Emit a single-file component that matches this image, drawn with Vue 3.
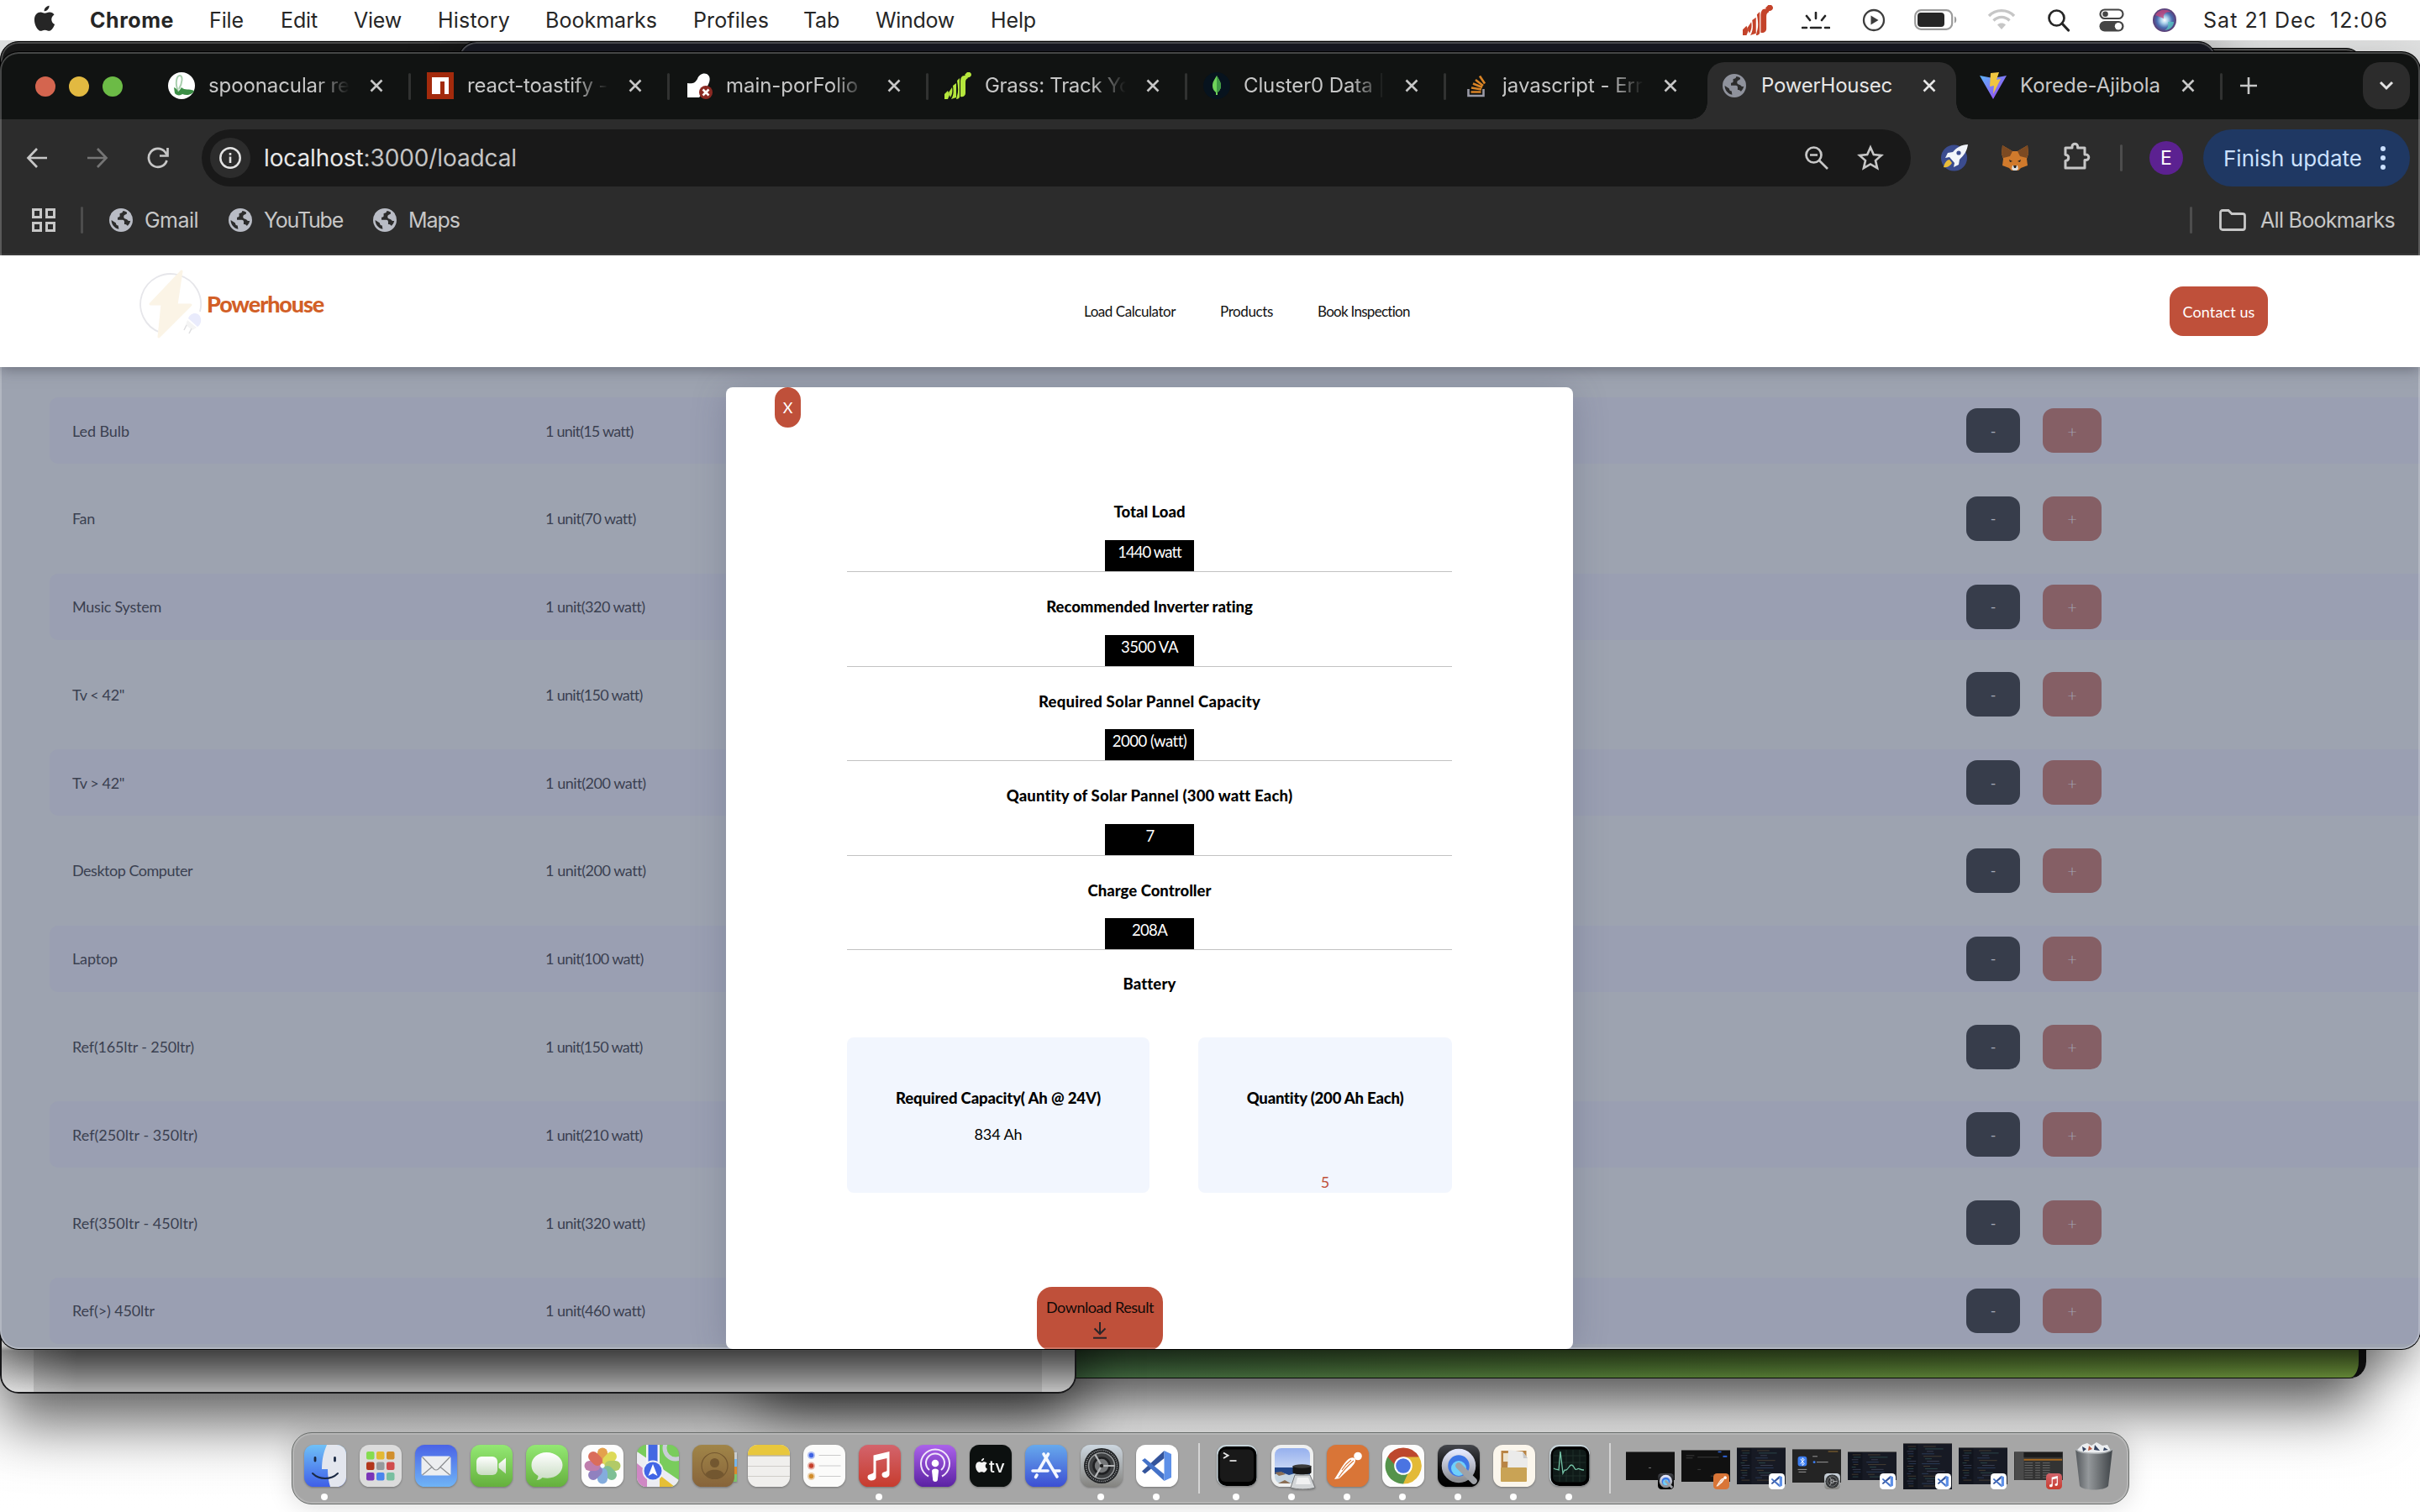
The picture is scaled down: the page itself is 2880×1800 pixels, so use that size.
<script setup>
// Spreads or tightens letter-spacing so that a label fills the given width.
const vFit = {
  mounted(el, { value }) {
    if (!value) return
    const natural = el.getBoundingClientRect().width
    el.style.letterSpacing = `${(value - natural) / el.textContent.trim().length}px`
  }
}

const menus = [
  { t: 'File', w: 41, cell: 85 },
  { t: 'Edit', w: 44, cell: 87 },
  { t: 'View', w: 57, cell: 100 },
  { t: 'History', w: 86, cell: 128 },
  { t: 'Bookmarks', w: 133, cell: 176 },
  { t: 'Profiles', w: 90, cell: 131 },
  { t: 'Tab', w: 43, cell: 86 },
  { t: 'Window', w: 94, cell: 137 },
  { t: 'Help', w: 54, cell: 60 }
]

const tabs = [
  { t: 'spoonacular re', w: 168, icon: 'spoon', fade: true },
  { t: 'react-toastify -', w: 167, icon: 'npm', fade: true },
  { t: 'main-porFolio', w: 157, icon: 'main', fade: true },
  { t: 'Grass: Track Yo', w: 174, icon: 'grass', fade: true },
  { t: 'Cluster0 Data |', w: 168, icon: 'mongo', fade: true },
  { t: 'javascript - Err', w: 167, icon: 'stack', fade: true },
  { t: 'PowerHousec', w: 156, icon: 'globe', active: true },
  { t: 'Korede-Ajibola', w: 167, icon: 'vite' }
]

const bookmarks = [
  { t: 'Gmail', w: 64, cell: 142 },
  { t: 'YouTube', w: 94, cell: 172 },
  { t: 'Maps', w: 61, cell: 120 }
]

const rows = [
  ['Led Bulb', 68, '15', 104],
  ['Fan', 27, '70', 107],
  ['Music System', 106, '320', 118],
  ['Tv < 42"', 62, '150', 115],
  ['Tv > 42"', 62, '200', 119],
  ['Desktop Computer', 143, '200', 119],
  ['Laptop', 54, '100', 116],
  ['Ref(165ltr - 250ltr)', 145, '150', 115],
  ['Ref(250ltr - 350ltr)', 149, '210', 115],
  ['Ref(350ltr - 450ltr)', 149, '320', 118],
  ['Ref(>) 450ltr', 98, '460', 118]
]

const results = [
  ['Total Load', 85, '1440 watt', 75],
  ['Recommended Inverter rating', 246, '3500 VA', 68],
  ['Required Solar Pannel Capacity', 264, '2000 (watt)', 88],
  ['Qauntity of Solar Pannel (300 watt Each)', 340, '7', 9],
  ['Charge Controller', 147, '208A', 42]
]

const apps = [
  ['finder', true], ['launchpad'], ['mail'], ['facetime'], ['messages'], ['photos'],
  ['maps'], ['contacts'], ['notes'], ['reminders'], ['music', true], ['podcasts'],
  ['tv'], ['appstore'], ['settings', true], ['vscode', true]
]
const running = ['terminal', 'preview', 'postman', 'chrome', 'quicktime', 'archive', 'activity']
const minis = [
  ['quicktime', 34, 'plain'], ['postman', 38, 'post'], ['vscode', 44, 'code'], ['settings', 40, 'sys'],
  ['vscode', 34, 'code'], ['vscode', 55, 'code'], ['vscode', 44, 'code'], ['music', 34, 'list']
]
const codeColors = ['#39557f', '#6b5a3d', '#3b6d68', '#585d78']
</script>

<template>
  <div class="desktop">
    <svg class="sprite" width="0" height="0" aria-hidden="true">
      <defs>
        <linearGradient id="gBlue" x1="0" y1="0" x2="0" y2="1"><stop offset="0" stop-color="#6fc0f7" /><stop offset="1" stop-color="#3f5fe8" /></linearGradient>
        <linearGradient id="gMail" x1="0" y1="0" x2="0" y2="1"><stop offset="0" stop-color="#4a63e6" /><stop offset="1" stop-color="#6fb4f6" /></linearGradient>
        <linearGradient id="gGreen" x1="0" y1="0" x2="0" y2="1"><stop offset="0" stop-color="#93e873" /><stop offset="1" stop-color="#65b03d" /></linearGradient>
        <linearGradient id="gRed" x1="0" y1="0" x2="0" y2="1"><stop offset="0" stop-color="#d3646c" /><stop offset="1" stop-color="#c73c2e" /></linearGradient>
        <linearGradient id="gPurple" x1="0" y1="0" x2="0" y2="1"><stop offset="0" stop-color="#ab62ea" /><stop offset="1" stop-color="#5b22a3" /></linearGradient>
        <linearGradient id="gStore" x1="0" y1="0" x2="0" y2="1"><stop offset="0" stop-color="#67a9ec" /><stop offset="1" stop-color="#3c4fd3" /></linearGradient>
        <linearGradient id="gBrown" x1="0" y1="0" x2="0" y2="1"><stop offset="0" stop-color="#a08548" /><stop offset="1" stop-color="#87643a" /></linearGradient>
        <linearGradient id="gGrey" x1="0" y1="0" x2="0" y2="1"><stop offset="0" stop-color="#cdd7e0" /><stop offset="1" stop-color="#84837f" /></linearGradient>
        <linearGradient id="gWhite" x1="0" y1="0" x2="0" y2="1"><stop offset="0" stop-color="#ffffff" /><stop offset="1" stop-color="#c9dcc2" /></linearGradient>
        <linearGradient id="gDark" x1="0" y1="0" x2="0" y2="1"><stop offset="0" stop-color="#44464c" /><stop offset=".6" stop-color="#0a0a0a" /><stop offset="1" stop-color="#000" /></linearGradient>
        <linearGradient id="gRing" x1="0" y1="0" x2="0" y2="1"><stop offset="0" stop-color="#e2e6fb" /><stop offset="1" stop-color="#8d8f94" /></linearGradient>
        <linearGradient id="gSky" x1="0" y1="0" x2="0" y2="1"><stop offset="0" stop-color="#96b0ee" /><stop offset="1" stop-color="#c3d3f4" /></linearGradient>
        <linearGradient id="gVite" x1="0" y1="0" x2="1" y2="1"><stop offset="0" stop-color="#5bb5fb" /><stop offset="1" stop-color="#a33df0" /></linearGradient>
        <linearGradient id="gTrash" x1="0" y1="0" x2="1" y2="0"><stop offset="0" stop-color="#55595d" /><stop offset=".35" stop-color="#94989b" /><stop offset=".6" stop-color="#74787b" /><stop offset="1" stop-color="#3f4448" /></linearGradient>
        <radialGradient id="gSiri"><stop offset="0" stop-color="#fff" /><stop offset=".3" stop-color="#a9d0ea" /><stop offset=".65" stop-color="#4a6cb0" /><stop offset="1" stop-color="#5b3a72" /></radialGradient>
        <clipPath id="tile"><rect width="50" height="50" rx="11.5" /></clipPath>
      </defs>

      <symbol id="globe" viewBox="0 0 24 24"><path fill="currentColor" fill-rule="evenodd" d="M12 0a12 12 0 1 0 0 24 12 12 0 0 0 0-24zM9.800 21.200C5.400 20.200 2.200 16.500 2.200 11.900l4.600 3.100c0 1.600 1 2.500 2.400 2.500zM14 2.600c-.2 1.900-1.600 2.600-3.200 2.600v2.600c0 1-.9 1.400-2.200 1.400v2.500h5c1.300 0 1.800.9 1.800 2v2.600c1.500 0 2.700.4 3.300 1.700a9.700 9.700 0 0 0 3-5.400c-1.500.6-2.500 0-3.200-.9-.9-1.200-3.500-.7-3.700-2.800-.2-2 1.200-2.400 2.400-2.900 1-.4.800-1.400.8-1.900a9.600 9.600 0 0 0-4-1.500z" /></symbol>
      <symbol id="close" viewBox="0 0 16 16"><path d="M1.500 1.500l13 13M14.500 1.500l-13 13" stroke="currentColor" stroke-width="2.600" fill="none" /></symbol>
      <symbol id="grass" viewBox="0 0 32 32"><path fill="currentColor" d="M0 32v-6l4-4 2 5-2 5zM5 24l4-6c1 5 0 9-2 12zM8 32c3-5 3-9 2-16l4-3v17zM15 28c2-6 1-12 0-18l3-3v22c0 2-2 3-4 3zM19 29V12c0-5 1-8 5-8h2l2 3c-2 1-3 2-3 5v13c0 3-3 5-6 4zM24 3l3-3c3-1 5 1 5 3s-3 4-5 3z" /></symbol>
      <symbol id="spoon" viewBox="0 0 32 32"><circle cx="16" cy="16" r="16" fill="#fff" /><path d="M12 22C8 14 10 4 14 4s3 9-1 16" fill="none" stroke="#a9cfae" stroke-width="2" /><path d="M7 18c3 1 4 3 5 5 2-2 3-3 4-5 4 4 9 1 15 4-2 5-9 6-14 4-2 2-7 2-9-1z" fill="#3c8f46" /></symbol>
      <symbol id="npm" viewBox="0 0 32 32"><path fill="#a32a0c" d="M0 0h32v32H0z" /><path fill="#fff" d="M6 6h20v20h-5V11h-5v15H6z" /></symbol>
      <symbol id="main" viewBox="0 0 32 32"><path fill="#fff" d="M2 30V13c6 1 9 0 12-5 2-7 11-9 14-3 2 5-1 9-3 14l-9 11z" /><circle cx="24" cy="24" r="8" fill="#8b2a23" /><path d="M20.500 20.500l7 7M27.500 20.500l-7 7" stroke="#fff" stroke-width="2.600" /></symbol>
      <symbol id="mongo" viewBox="0 0 32 32"><circle cx="16" cy="16" r="16" fill="#07131e" /><path fill="#6fd35a" d="M16 4c2 4 5 7 5 12 0 5-3 7-4 8v3h-2v-3c-1-1-4-3-4-8 0-5 3-8 5-12z" /><path fill="#3f9a45" d="M16 4c2 4 5 7 5 12 0 5-3 7-5 9z" /></symbol>
      <symbol id="stack" viewBox="0 0 32 32"><path d="M7.500 20v8h18v-8" fill="none" stroke="#9a9aa6" stroke-width="2.600" /><path d="M10.500 23.500h12M11 18.500l12 2M13 13.500l11 4.500M16 9l9 7M21 4.500l6 9" stroke="#d98325" stroke-width="2.600" /></symbol>
      <symbol id="vite" viewBox="0 0 32 32"><path fill="url(#gVite)" d="M0 4l16 3 16-3-16 28z" /><path fill="#f0c640" d="M13 1l10-1-3 9 5-1-9 18 1-10-5 1z" /></symbol>

      <symbol id="finder" viewBox="0 0 50 50"><g clip-path="url(#tile)"><path fill="url(#gBlue)" d="M0 0h50v50H0z" /><path fill="#e3e6ee" d="M27 0c-4 9-6 18-6 29h7c0 8 1 15 3 21h19V0z" /></g><path d="M13 15.500v3.500M36.500 15.500v3.500" stroke="#1b2a44" stroke-width="2.800" stroke-linecap="round" /><path d="M10 34c8 8 22 8 30 0" fill="none" stroke="#1b2a44" stroke-width="2" stroke-linecap="round" /></symbol>
      <symbol id="launchpad" viewBox="0 0 50 50"><rect width="50" height="50" rx="11.500" fill="#dcdcdc" /><g><rect x="8" y="8" width="9.500" height="9.500" rx="2" fill="#86dc50" /><rect x="20" y="8" width="9.500" height="9.500" rx="2" fill="#e3b935" /><rect x="32" y="8" width="9.500" height="9.500" rx="2" fill="#d18f2d" /><rect x="8" y="20.500" width="9.500" height="9.500" rx="2" fill="#b2371c" /><rect x="20" y="20.500" width="9.500" height="9.500" rx="2" fill="#979a9c" /><rect x="32" y="20.500" width="9.500" height="9.500" rx="2" fill="#d04c4c" /><rect x="8" y="33" width="9.500" height="9.500" rx="2" fill="#7a35b8" /><rect x="20" y="33" width="9.500" height="9.500" rx="2" fill="#4a86ee" /><rect x="32" y="33" width="9.500" height="9.500" rx="2" fill="#78bfa0" /></g></symbol>
      <symbol id="mail" viewBox="0 0 50 50"><rect width="50" height="50" rx="11.500" fill="url(#gMail)" /><rect x="7.500" y="13.500" width="35" height="23" rx="2.500" fill="#eceef0" /><path d="M8.500 14.500l14 14.500q2.500 2 5 0l14-14.500M8.500 36l12-10M41.500 36l-12-10" fill="none" stroke="#8b8d90" stroke-width="1.200" /></symbol>
      <symbol id="facetime" viewBox="0 0 50 50"><rect width="50" height="50" rx="11.500" fill="url(#gGreen)" /><rect x="7" y="14" width="25" height="22" rx="6" fill="url(#gWhite)" /><path d="M33.500 22.500l8.500-7v19l-8.500-7z" fill="url(#gWhite)" /></symbol>
      <symbol id="messages" viewBox="0 0 50 50"><rect width="50" height="50" rx="11.500" fill="url(#gGreen)" /><path d="M24.500 9C14 9 6.500 16 6.500 24c0 6 3 10 8 13 0 2-1 4-2 5 3 0 5-1 7-3 14 3 24-5 24-15C43.500 16 35 9 24.500 9z" fill="url(#gWhite)" /></symbol>
      <symbol id="photos" viewBox="0 0 50 50"><rect width="50" height="50" rx="11.500" fill="#fdfdfd" /><g opacity=".85"><rect x="19" y="3.500" width="12" height="19" rx="6" fill="#e0922f" /><rect x="19" y="3.500" width="12" height="19" rx="6" fill="#d8d53c" transform="rotate(45 25 25)" /><rect x="19" y="3.500" width="12" height="19" rx="6" fill="#a5c24d" transform="rotate(90 25 25)" /><rect x="19" y="3.500" width="12" height="19" rx="6" fill="#68b583" transform="rotate(135 25 25)" /><rect x="19" y="3.500" width="12" height="19" rx="6" fill="#6f9fd8" transform="rotate(180 25 25)" /><rect x="19" y="3.500" width="12" height="19" rx="6" fill="#7e6cb5" transform="rotate(225 25 25)" /><rect x="19" y="3.500" width="12" height="19" rx="6" fill="#b569a0" transform="rotate(270 25 25)" /><rect x="19" y="3.500" width="12" height="19" rx="6" fill="#d4543f" transform="rotate(315 25 25)" /></g></symbol>
      <symbol id="maps" viewBox="0 0 50 50"><g clip-path="url(#tile)"><path fill="#79cc5c" d="M0 0h50v50H0z" /><path fill="#ececf2" d="M0 8l50 34v8H0z" /><path fill="#e6bf36" d="M27 36l18 14H27z" /><path fill="#cf87c4" d="M0 22l12 10v18H0z" /><circle cx="46" cy="4" r="13" fill="none" stroke="#c9cdd6" stroke-width="5" /><path fill="#f4f4f6" d="M11 0h16v22H11z" /><path fill="#4468e2" d="M13.500 0h11v24h-11z" /></g><circle cx="19" cy="31" r="12.500" fill="#eef0f6" /><circle cx="19" cy="31" r="10.500" fill="#4166e6" /><path fill="#fff" d="M19 23l5.500 14-5.500-3-5.500 3z" /></symbol>
      <symbol id="contacts" viewBox="0 0 54 50"><path d="M46 9h7v8h-7z" fill="#c9ccce" /><path d="M46 17h7v9h-7z" fill="#76b5ea" /><path d="M46 26h7v9h-7z" fill="#d88a2b" /><path d="M46 35h7v9h-7z" fill="#7cc46a" /><rect width="50" height="50" rx="11.500" fill="url(#gBrown)" /><circle cx="26.500" cy="25" r="15.500" fill="none" stroke="#735730" stroke-width="1.200" /><circle cx="26.500" cy="21.500" r="5.500" fill="#735730" /><path d="M15.500 35c3-7 19-7 22 0-5 7-17 7-22 0z" fill="#735730" /></symbol>
      <symbol id="notes" viewBox="0 0 50 50"><g clip-path="url(#tile)"><path fill="#f0efed" d="M0 0h50v50H0z" /><path fill="#e8c73c" d="M0 0h50v12.500H0z" /><path fill="#a39a78" d="M0 12.500h50v1H0z" /><path stroke="#cfcdc9" stroke-width="1" d="M0 25.500h50M0 37.500h50" /></g></symbol>
      <symbol id="reminders" viewBox="0 0 50 50"><rect width="50" height="50" rx="11.500" fill="#fbfbfa" /><g fill-opacity=".4"><circle cx="9.500" cy="12.500" r="4.500" fill="#3f64e4" /><circle cx="9.500" cy="25" r="4.500" fill="#c6402b" /><circle cx="9.500" cy="37.500" r="4.500" fill="#d28d2c" /></g><circle cx="9.500" cy="12.500" r="2.700" fill="#3f64e4" /><circle cx="9.500" cy="25" r="2.700" fill="#c6402b" /><circle cx="9.500" cy="37.500" r="2.700" fill="#d28d2c" /><path d="M18.500 12.500h26M18.500 25h26M18.500 37.500h26" stroke="#cbcbcb" stroke-width="1.200" /></symbol>
      <symbol id="music" viewBox="0 0 50 50"><rect width="50" height="50" rx="11.500" fill="url(#gRed)" /><path d="M17.500 12.500l19-4.500v27c0 5-9 6-9 .5 0-4 6-3 6-5V16l-13 3v19.500c0 5-10 5.500-10 0 0-4.500 7-3 7-6z" fill="#fff" /></symbol>
      <symbol id="podcasts" viewBox="0 0 50 50"><rect width="50" height="50" rx="11.500" fill="url(#gPurple)" /><g fill="none" stroke="#f1e6fa" stroke-width="2"><path d="M17 37.500a17 17 0 1 1 16 0" /><path d="M18 30a11 11 0 1 1 14 0" /></g><circle cx="25" cy="22" r="4.300" fill="#fff" /><path d="M21 31c0-3.500 8-3.500 8 0l-1.200 11c-.5 2.500-5.100 2.500-5.600 0z" fill="#fff" /></symbol>
      <symbol id="apple" viewBox="0 0 28 34"><path fill="currentColor" d="M20 .5c.3 3.600-3 7.300-6.400 7.200C13.200 4.200 16.500.8 20 .5zM27 24.500c-1.500 4.200-4.500 8.500-7.300 8.500-2 0-2.800-1.200-5.200-1.200-2.500 0-3.300 1.200-5.200 1.200C5.500 33 1 26 1 18.500 1 12.500 5 9 9 9c2.200 0 4 1.400 5.400 1.400S18 8.800 20.600 9c2.500.1 4.600 1.300 5.800 3.200-5 3-4.400 10 .6 12.300z" /></symbol>
      <symbol id="tv" viewBox="0 0 50 50"><rect width="50" height="50" rx="11.500" fill="#0c100f" /><use href="#apple" x="6.500" y="15.500" width="15" height="18" color="#f4f4f4" /><text x="23" y="33" fill="#f4f4f4" font-family="Inter, sans-serif" font-weight="500" font-size="20">tv</text></symbol>
      <symbol id="appstore" viewBox="0 0 50 50"><rect width="50" height="50" rx="11.500" fill="url(#gStore)" /><g stroke="#f5f8ff" stroke-width="3.600" stroke-linecap="round"><path d="M27.500 11L16 31M22 11l16 27M9 31h18M34 31h7M14 36l-1.500 2.500" /></g></symbol>
      <symbol id="settings" viewBox="0 0 50 50"><rect width="50" height="50" rx="11.500" fill="url(#gGrey)" /><circle cx="25" cy="25" r="21" fill="#202224" /><circle cx="25" cy="25" r="18.500" fill="none" stroke="#8e9194" stroke-width="1.600" stroke-dasharray="1.200 1.200" /><circle cx="25" cy="25" r="15.500" fill="#3f4143" stroke="#95989a" stroke-width="1.600" /><circle cx="25" cy="25" r="9.500" fill="#757779" stroke="#1f2022" stroke-width="2.600" /><path d="M25 25h15.500M25 25l-7.700-13.400M25 25l-7.700 13.400" stroke="#b6b8ba" stroke-width="2.200" /><circle cx="25" cy="25" r="2.200" fill="#222" /></symbol>
      <symbol id="vscode" viewBox="0 0 50 50"><rect width="50" height="50" rx="11.500" fill="#fff" /><path d="M7 31.500l3.500 3L33.500 16V7z" fill="#34549b" /><path d="M7 18.500l3.500-2.500 23 19v8z" fill="#4472c8" /><path d="M33.500 7l8.500 4v28l-8.500 4z" fill="#5d90e8" /></symbol>
      <symbol id="terminal" viewBox="0 0 50 50"><rect x="1" y="0" width="48" height="49" rx="11" fill="#c7d4da" /><rect x="2.500" y="2" width="46" height="47" rx="10" fill="#000" /><rect x="5" y="5.500" width="40" height="38.500" rx="6" fill="#191919" /><path d="M9 9.500l5.500 3.200L9 16" fill="none" stroke="#e8e8e8" stroke-width="1.900" /><path d="M16.500 19h8" stroke="#e8e8e8" stroke-width="1.700" /></symbol>
      <symbol id="preview" viewBox="0 0 53 53"><rect width="50" height="50" rx="11.500" fill="#eff0f0" /><path d="M4 12a8 8 0 0 1 8-8h26a8 8 0 0 1 8 8v15H4z" fill="url(#gSky)" /><path d="M4 27h42v10H4z" fill="#21468a" /><path d="M4 35l9-2 8 3 7-2 18 1v3a8 8 0 0 1-8 8H12a8 8 0 0 1-8-8z" fill="#c6d5e1" /><path d="M4 33l8-1 5 3-8 2zM8 46l8-4 7 4z" fill="#8b6f55" /><path d="M28 36h18l6 15c-7 2.500-22 2.500-29 0z" fill="#d3d6d8" stroke="#77797b" /><path d="M31 39h13l3 8H29z" fill="#f0f1f2" /><path d="M25.500 25h22v8c0 3-22 3-22 0z" fill="#161616" /><ellipse cx="36.500" cy="25.500" rx="11" ry="2.200" fill="#3b3b3b" /></symbol>
      <symbol id="postman" viewBox="0 0 50 50"><rect width="50" height="50" rx="11.500" fill="#d97537" /><circle cx="37" cy="13.500" r="4.800" fill="#fff" /><path d="M9 41c4-6 7-12 12-19 4-5 8-8 12-6 3 3-1 8-5 12-5 4-9 8-13 12z" fill="#fff" /><path d="M32 19c-6 5-12 11-18 20M29 18c-4 3-8 7-11 12" stroke="#d97537" stroke-width="1.100" fill="none" /></symbol>
      <symbol id="chrome" viewBox="0 0 50 50"><rect width="50" height="50" rx="11.500" fill="#fcfcfc" /><path fill="#bd482e" d="M25 25L6.400 14.300a21.500 21.500 0 0 1 37.300 0z" /><path fill="#e3ba38" d="M25 25l18.600-11A21.500 21.500 0 0 1 25 46.500z" /><path fill="#54934b" d="M25 25v21.500A21.500 21.500 0 0 1 6.400 14.300z" /><path fill="#bd482e" d="M16 25L6.400 14.300 25 14.500h19L25 18z" /><path fill="#54934b" d="M16.500 30L6.400 14.300l10 14 15 5L25 46.500z" /><path fill="#e3ba38" d="M25 14.500h18.800l-9 17L25 46.500 32 31z" /><circle cx="25" cy="25" r="10.800" fill="#fff" /><circle cx="25" cy="25" r="8.800" fill="#4a74e2" /></symbol>
      <symbol id="quicktime" viewBox="0 0 50 50"><rect width="50" height="50" rx="11.500" fill="url(#gDark)" /><circle cx="25" cy="25" r="16.500" fill="#3d76e6" stroke="url(#gRing)" stroke-width="7.500" /><circle cx="25" cy="28" r="9" fill="#6fd0fb" /><path d="M25 25l18 18" stroke="#9fa2a7" stroke-width="7.500" stroke-linecap="round" /></symbol>
      <symbol id="archive" viewBox="0 0 50 50"><rect width="50" height="50" rx="11.500" fill="#fbf6ec" /><path d="M9.500 7h30v22h-30z" fill="#b98545" /><path d="M12 10h6v10h-6z" fill="#ece2cc" /><path d="M18 6l17 2 6 8v14H17z" fill="#ebebea" /><path d="M35 8l6 8h-5z" fill="#c8c8c8" /><rect x="9" y="27" width="31" height="17" rx="1" fill="#c9a355" /></symbol>
      <symbol id="activity" viewBox="0 0 50 50"><rect x="1" y="0" width="48" height="49" rx="11" fill="#c7d4da" /><rect x="2.500" y="2" width="46" height="47" rx="10" fill="#000" /><rect x="5" y="5.500" width="40" height="39" rx="6" fill="#0f1a18" /><path d="M13 6v38M21 6v38M29 6v38M37 6v38M6 13h38M6 21h38M6 37h38" stroke="#22352f" stroke-width=".8" /><path d="M6 28c3 2 4 1 6 2l2-22 3 26 2-4c4 2 5-6 8-6 4 0 3 7 7 5 2-2 3 1 8 1" fill="none" stroke="#74c3a6" stroke-width="1.300" /></symbol>
    </svg>

    <div class="win back-a"></div>
    <div class="win back-c"></div>
    <div class="win back-b"></div>
    <div class="win green"></div>
    <div class="win grey"></div>

    <header class="menubar">
      <svg class="apple"><use href="#apple" /></svg>
      <span class="m-app"><b v-fit="100">Chrome</b></span>
      <span v-for="m in menus" :key="m.t" class="m-item" :style="{ width: m.cell + 'px' }"><span v-fit="m.w">{{ m.t }}</span></span>
      <div class="status">
        <svg width="36" height="36" color="#c4432a"><use href="#grass" /></svg>
        <svg width="34" height="22" viewBox="0 0 34 22" class="st-bright"><path d="M17 1v7M6 5l4 5M28 5l-4 5M1 19h5M11 19h12M28 19h5" stroke="#262626" stroke-width="2.600" stroke-linecap="round" fill="none" /></svg>
        <svg width="28" height="28" viewBox="0 0 28 28" class="st-play"><circle cx="14" cy="14" r="12" fill="none" stroke="#3d3d3d" stroke-width="2.300" /><path d="M10.500 8.500v11l9-5.500z" fill="#3d3d3d" /></svg>
        <svg width="52" height="26" viewBox="0 0 52 26" class="st-batt"><rect x="1.200" y="1.200" width="44" height="22.600" rx="7" fill="none" stroke="#9b9b9b" stroke-width="2.200" /><rect x="4" y="4" width="32" height="17" rx="4" fill="#262626" /><path d="M48 8.500c3 1 3 7 0 8z" fill="#9b9b9b" /></svg>
        <svg width="34" height="26" viewBox="0 0 34 26" class="st-wifi"><g fill="none" stroke="#c6c6c6" stroke-width="3.400"><path d="M2 9C10 .5 24 .5 32 9" /><path d="M7.500 14.500c5.500-5.500 13.500-5.500 19 0" /></g><path d="M17 25l-5-5.500c3-2.600 7-2.600 10 0z" fill="#c6c6c6" /></svg>
        <svg width="28" height="28" viewBox="0 0 28 28" class="st-find"><circle cx="11.500" cy="11.500" r="9" fill="none" stroke="#262626" stroke-width="2.700" /><path d="M18 18l7.500 8" stroke="#262626" stroke-width="3.200" stroke-linecap="round" /></svg>
        <svg width="30" height="28" viewBox="0 0 30 28" class="st-cc"><rect x="1.500" y="1.500" width="27" height="10.500" rx="5.250" fill="none" stroke="#454545" stroke-width="2.200" /><circle cx="7.500" cy="6.700" r="3.300" fill="#454545" /><rect x=".5" y="15" width="29" height="12.500" rx="6.250" fill="#454545" /><circle cx="23" cy="21.200" r="4.200" fill="#fff" /></svg>
        <svg width="28" height="28" viewBox="0 0 28 28" class="st-siri"><circle cx="14" cy="14" r="14" fill="url(#gSiri)" /><path d="M3 8c5-8 14-7 18-4-6 0-9 3-8 8-4-2-8-3-10-4z" fill="#c2457c" opacity=".8" /><path d="M25 16c0 6-6 10-11 10 4-2 5-6 4-10z" fill="#57c3c0" opacity=".8" /></svg>
        <span class="clock" v-fit="220">Sat 21 Dec&nbsp; 12:06</span>
      </div>
    </header>

    <main class="win browser">
      <div class="tabstrip">
        <div class="lights"><i class="r"></i><i class="y"></i><i class="g"></i></div>
        <div v-for="tab in tabs" :key="tab.t" class="tab" :class="{ active: tab.active, presep: tab.icon === 'stack' }">
          <svg class="fav" :class="tab.icon"><use :href="'#' + tab.icon" /></svg>
          <span class="title" :class="{ fade: tab.fade }"><span v-fit="tab.w">{{ tab.t }}</span></span>
          <svg class="x"><use href="#close" /></svg>
        </div>
        <svg class="plus" viewBox="0 0 22 22"><path d="M11 1v20M1 11h20" stroke="#c7c7c7" stroke-width="2.600" /></svg>
        <div class="chev"><svg width="18" height="12" viewBox="0 0 18 12"><path d="M2 2l7 7 7-7" fill="none" stroke="#e3e3e3" stroke-width="3" /></svg></div>
      </div>

      <div class="toolbar">
        <svg class="nav-i" viewBox="0 0 26 26"><path d="M25 13H3M13 2L2.500 13 13 24" fill="none" stroke="#c7c7c7" stroke-width="2.700" /></svg>
        <svg class="nav-i" viewBox="0 0 26 26"><path d="M1 13h22M13 2l10.500 11L13 24" fill="none" stroke="#757575" stroke-width="2.700" /></svg>
        <svg class="nav-i" viewBox="0 0 26 26"><path d="M23.500 16A11 11 0 1 1 21.500 6l2 3" fill="none" stroke="#c7c7c7" stroke-width="2.700" /><path d="M24.500 1v9.500H15" fill="none" stroke="#c7c7c7" stroke-width="2.700" /></svg>
        <div class="omni">
          <span class="info"><svg width="28" height="28" viewBox="0 0 28 28"><circle cx="14" cy="14" r="11.700" fill="none" stroke="#e3e3e3" stroke-width="2.500" /><path d="M14 12.500v7.500M14 8v2.700" stroke="#e3e3e3" stroke-width="2.600" /></svg></span>
          <span class="url" v-fit="301"><em>localhost</em>:3000/loadcal</span>
          <svg class="o-zoom" width="30" height="30" viewBox="0 0 30 30"><g fill="none" stroke="#c7c7c7" stroke-width="2.700"><circle cx="11.500" cy="11.500" r="9" /><path d="M18 18l10 10M7 11.500h9" /></g></svg>
          <svg class="o-star" width="32" height="32" viewBox="0 0 32 32"><path d="M16 3.500l3.800 8.500 9.200.9-7 6.200 2.100 9.100-8.100-4.800-8.100 4.800L10 19.100l-7-6.200 9.200-.9z" fill="none" stroke="#c7c7c7" stroke-width="2.600" /></svg>
        </div>
        <svg class="e-rocket" width="32" height="32" viewBox="0 0 32 32"><circle cx="15.500" cy="16" r="15.500" fill="#3b4c8f" /><path d="M3 27c1-5 4-9 7-9l3 4c-2 3-5 6-10 5z" fill="#e9bd3b" /><path d="M32 0c-8 0-14 4-18 9l-6 1-3 6 5-1 6 7-1 5 6-3 1-6c5-5 9-10 10-18z" fill="#f2f5fa" /><circle cx="21" cy="10" r="2.600" fill="#3b4c8f" /></svg>
        <svg class="e-fox" width="32" height="30" viewBox="0 0 32 30"><path d="M1 0l12 7h6l12-7 1 10-2 6 1 8-8 3-3 3h-8l-3-3-8-3 1-8-2-6z" fill="#d07a2c" /><path d="M1 0l12 7-3 6-8 2-2-5zM31 0L19 7l3 6 8 2 2-5z" fill="#7c4a22" /><path d="M13 24h6l1 4-2 2h-4l-2-2z" fill="#ddd" /><path d="M14 24h4l-1 3h-2zM9 17l4 2-3 1zM23 17l-4 2 3 1z" fill="#222" /></svg>
        <svg class="e-puz" width="34" height="34" viewBox="0 0 34 34"><path d="M4 7h8V5.500a3.300 3.300 0 0 1 6.600 0V7H27v8h1.500a3.300 3.300 0 0 1 0 6.600H27V31H4v-8.500c5-.3 5-7 0-7.300z" fill="none" stroke="#c7c7c7" stroke-width="3" stroke-linejoin="round" /></svg>
        <i class="vsep"></i>
        <span class="avatar">E</span>
        <div class="finish"><span v-fit="165">Finish update</span><b></b><b></b><b></b></div>
      </div>

      <div class="bookbar">
        <svg class="grid" width="28" height="28" viewBox="0 0 28 28"><path d="M1.500 1.500h9v9h-9zM17.500 1.500h9v9h-9zM1.500 17.500h9v9h-9zM17.500 17.500h9v9h-9z" fill="none" stroke="#c7c7c7" stroke-width="3" /></svg>
        <i class="vsep"></i>
        <span v-for="b in bookmarks" :key="b.t" class="bm" :style="{ width: b.cell + 'px' }"><svg width="28" height="28"><use href="#globe" /></svg><span v-fit="b.w">{{ b.t }}</span></span>
        <div class="allbm">
          <i class="vsep"></i>
          <svg width="32" height="26" viewBox="0 0 32 26"><path d="M1.500 4A2.500 2.500 0 0 1 4 1.500h7l4 4h13A2.500 2.500 0 0 1 30.500 8v14a2.500 2.500 0 0 1-2.500 2.500H4A2.500 2.500 0 0 1 1.500 22z" fill="none" stroke="#c7c7c7" stroke-width="2.800" /></svg>
          <span v-fit="160">All Bookmarks</span>
        </div>
      </div>

      <div class="page">
        <div class="site-head">
          <div class="brand">
            <svg width="76" height="84" viewBox="0 0 76 84"><path d="M25 75A36 36 0 1 1 72 50" fill="none" stroke="#e6e6ea" stroke-width="1.800" /><path d="M50 2L13 41h14l-4 39 38-38H44z" fill="#fbf4e6" stroke="#fbf4e6" stroke-width="3" stroke-linejoin="round" /><path d="M58 58c2-6 9-8 13-4 4 5 2 12-2 14z" fill="#e9ebfc" /><path d="M57 60l11 9-5 3-8-6z" fill="#f4f4f4" /><path d="M56 66l-3 6M62 70l-3 6" stroke="#dedee0" stroke-width="1.500" /></svg>
            <strong v-fit="139">Powerhouse</strong>
          </div>
          <nav><a v-fit="109">Load Calculator</a><a v-fit="63">Products</a><a v-fit="110">Book Inspection</a></nav>
          <button class="contact"><span v-fit="86">Contact us</span></button>
        </div>

        <div class="content">
          <div v-for="(r, i) in rows" :key="i" class="row" :class="{ tint: i % 2 === 0 }">
            <span class="name"><span v-fit="r[1]">{{ r[0] }}</span></span>
            <span class="unit"><span v-fit="r[3]">1 unit({{ r[2] }} watt)</span></span>
            <span class="minus">-</span>
            <span class="add">+</span>
          </div>
        </div>

        <section class="modal">
          <button class="dismiss">X</button>
          <div class="results">
            <div v-for="r in results" :key="r[0]" class="res">
              <h4><span v-fit="r[1]">{{ r[0] }}</span></h4>
              <p><span v-fit="r[3]">{{ r[2] }}</span></p>
            </div>
          </div>
          <h4 class="bat"><span v-fit="62">Battery</span></h4>
          <div class="cards">
            <div class="card wide"><h4><span v-fit="244">Required Capacity( Ah @ 24V)</span></h4><p><span v-fit="57">834 Ah</span></p></div>
            <div class="card"><h4><span v-fit="187">Quantity (200 Ah Each)</span></h4><p class="five">5</p></div>
          </div>
          <button class="download">
            <span v-fit="128">Download Result</span>
            <svg width="18" height="22" viewBox="0 0 18 22"><path d="M9 1v13M2.500 8.500L9 15l6.500-6.500M1 19.800h16" fill="none" stroke="#2b2529" stroke-width="2" /></svg>
          </button>
        </section>
      </div>
    </main>

    <footer class="dock">
      <span v-for="a in apps" :key="a[0]" class="app"><svg :class="a[0]"><use :href="'#' + a[0]" /></svg><i v-if="a[1]"></i></span>
      <i class="dsep"></i>
      <span v-for="a in running" :key="a" class="app"><svg :class="a"><use :href="'#' + a" /></svg><i></i></span>
      <i class="dsep second"></i>
      <span v-for="(m, i) in minis" :key="i" class="mini">
        <svg class="thumb" :class="m[2]" :style="{ height: m[1] + 'px' }" :viewBox="'0 0 58 ' + m[1]">
          <template v-if="m[2] === 'code'">
            <path d="M0 0h17v60H0z" fill="#11141d" />
            <path v-for="n in Math.floor(m[1] / 3) - 1" :key="n" :d="`M${4 + (n % 3)} ${n * 3}h${5 + (n * 5) % 6}M${22 + (n % 4) * 2} ${n * 3}h${8 + (n * 7) % 21}`" :stroke="codeColors[n % 4]" stroke-width=".9" opacity=".6" />
          </template>
          <template v-else-if="m[2] === 'sys'">
            <rect x="6" y="8" width="11" height="12" rx="3" fill="#3c7df0" /><path d="M9 11l5 6-2.500 2v-9l2.500 2-5 5" fill="none" stroke="#fff" stroke-width=".9" />
            <path d="M6 24h11M7 27h9M24 8h6M29 15h14" stroke="#9a9a9a" stroke-width="1" /><circle cx="26" cy="15" r="1.500" fill="#3c7df0" /><path d="M43 2h12" stroke="#5d4a2a" stroke-width="2" />
          </template>
          <template v-else-if="m[2] === 'post'">
            <path d="M5 6h10M5 9h8M19 8h26M19 23h4M35 31h4" stroke="#3c3c3c" stroke-width="1" /><path d="M50 7h5" stroke="#2f64d8" stroke-width="2" /><path d="M44 1.500h4" stroke="#2f64d8" stroke-width="1.500" />
          </template>
          <template v-else-if="m[2] === 'list'">
            <path d="M0 0h11v40H0z" fill="#4a4a4a" /><path d="M11 0h47v6H11z" fill="#1c1c1c" /><path d="M11 9h47" stroke="#a5671f" stroke-width="2" />
            <path v-for="n in 7" :key="n" :d="`M12 ${10 + n * 3}h10M25 ${10 + n * 3}h6M34 ${10 + n * 3}h9`" stroke="#777" stroke-width=".8" />
          </template>
          <path v-else d="M27 19h3" stroke="#777" stroke-width="1" />
        </svg>
        <svg class="badge"><use :href="'#' + m[0]" /></svg>
      </span>
      <svg class="trash" width="46" height="58" viewBox="0 0 46 58"><path d="M3 10L9 4l6-2 5 3 6-4 7 4 6-1 4 7-8 6H9z" fill="#eceef0" /><path d="M9 6l5 3-4 3zM24 4l6 7-7-1zM35 7l5 3-6 1z" fill="#33425f" /><path d="M17 5l4 4-5 2z" fill="#b8553d" /><path d="M1 9c6 7 38 7 44 0l-5 44c-4 6-30 6-34 0z" fill="url(#gTrash)" /><path d="M1 9c6 7 38 7 44 0" fill="none" stroke="#a9adb0" stroke-width="1.500" /></svg>
    </footer>
  </div>
</template>

<style>
html, body { margin: 0; background: #fff; }
</style>

<style scoped>
.desktop { position: relative; width: 2880px; height: 1800px; overflow: hidden; background: linear-gradient(#d9dada 0, #f6f6f6 200px, #fff 100%); font-family: Inter, "Liberation Sans", sans-serif; }
.desktop * { box-sizing: border-box; }
.desktop span { white-space: nowrap; }
.m-item > span { display: inline-block; }
.sprite { position: absolute; }
.win { position: absolute; }

.menubar { position: absolute; inset: 0 0 auto 0; height: 48px; background: #fff; display: flex; align-items: center; color: #262626; font-size: 25px; padding-left: 40px; z-index: 5; }
.apple { width: 26px; height: 32px; margin: -4px 41px 0 0; flex: none; }
.m-app { width: 142px; flex: none; }
.m-app b { display: inline-block; font-weight: 700; }
.m-item { flex: none; }
.status { position: absolute; left: 2074px; top: 0; height: 48px; display: flex; align-items: center; }
.status svg { flex: none; }
.st-bright { margin: 2px 0 0 34px; }
.st-play { margin-left: 38px; }
.st-batt { margin-left: 34px; }
.st-wifi { margin: -2px 0 0 35px; }
.st-find { margin-left: 37px; }
.st-cc { margin-left: 34px; }
.st-siri { margin-left: 34px; }
.clock { margin-left: 32px; }

.back-a { left: 0; top: 49px; width: 1400px; height: 600px; border-radius: 22px; background: #181818; border: 1px solid #000; box-shadow: inset 0 0 0 2px #4c4c4c; }
.back-b { left: 545px; top: 49px; width: 2093px; height: 1400px; border-radius: 22px; background: #181922; border: 1px solid #000; box-shadow: inset 0 0 0 2px #4c4d52, 0 0 60px rgba(0, 0, 0, .35); }
.back-c { left: 1400px; top: 57px; width: 1412px; height: 900px; border-radius: 20px; background: #222; border: 1px solid #000; box-shadow: inset 0 0 0 2px #555; }
.green { left: 900px; top: 400px; width: 1916px; height: 1241px; border-radius: 20px; border: 1px solid #0a0a0a; border-right: 9px solid #101010; background: linear-gradient(100deg, #416d4b 20%, #5f8c3c 60%, #76a040 100%); box-shadow: 0 36px 70px rgba(0, 0, 0, .62); }
.green::after { content: ""; position: absolute; inset: 0; border-radius: 0 0 12px 18px; background: linear-gradient(transparent 1195px, rgba(0, 0, 0, .5) 1206px, rgba(0, 0, 0, .08) 100%); }
.grey { left: 0; top: 600px; width: 1281px; height: 1059px; border-radius: 22px; border: 2px solid #1a1a1c; background: linear-gradient(90deg, #dedede 38px, #bababa 38px, #bababa 1238px, #d0d0d0 1238px); box-shadow: 0 36px 70px rgba(0, 0, 0, .6); }
.grey::after { content: ""; position: absolute; inset: 0; border-radius: 20px; background: linear-gradient(90deg, rgba(255, 255, 255, .35) 0, transparent 90px), linear-gradient(transparent 1000px, rgba(0, 0, 0, .5) 1006px, rgba(0, 0, 0, .04) 100%); }

.browser { left: 0; top: 62px; width: 2880px; height: 1544px; border-radius: 22px; overflow: hidden; background: #2c2c2c; box-shadow: 0 0 0 1px #000, 0 20px 50px rgba(0, 0, 0, .35); display: flex; flex-direction: column; }
.browser::after { content: ""; position: absolute; inset: 0; border-radius: 22px; box-shadow: inset 0 0 0 2px rgba(255, 255, 255, .22); pointer-events: none; }

.tabstrip { height: 80px; background: #111312; display: flex; flex: none; align-items: center; }
.lights { display: flex; gap: 16px; width: 180px; padding-left: 42px; flex: none; }
.lights i { width: 24px; height: 24px; border-radius: 50%; margin-top: 1px; }
.r { background: #d4654f; } .y { background: #e2b941; } .g { background: #6cbb46; }
.tab { position: relative; width: 308px; height: 80px; flex: none; display: flex; align-items: center; padding-left: 20px; color: #c7c7c7; }
.tab::before { content: ""; position: absolute; right: -1px; top: 25px; width: 3px; height: 32px; border-radius: 2px; background: #313231; }
.tab.presep::before { display: none; }
.fav { width: 32px; height: 32px; flex: none; color: #8f929c; }
.fav.globe { width: 28px; height: 28px; margin: 0 2px; }
.fav.grass { color: #b5e63c; }
.title { width: 168px; margin-left: 16px; overflow: hidden; font-size: 24px; line-height: 34px; flex: none; }
.title > span { display: inline-block; }
.title.fade { -webkit-mask-image: linear-gradient(90deg, #000 76%, transparent 100%); mask-image: linear-gradient(90deg, #000 76%, transparent 100%); }
.x { width: 16px; height: 16px; margin-left: 24px; flex: none; }
.tab.active { color: #e6e6e6; z-index: 0; }
.tab.active::after { content: ""; position: absolute; left: 4px; width: 296px; top: 12px; bottom: 0; border-radius: 20px 20px 0 0; background: #2c2c2c; z-index: -1; }
.tab.active::before { left: -16px; right: auto; width: 336px; height: 20px; top: 60px; border-radius: 0; z-index: -1; background: radial-gradient(circle at 0 0, transparent 19.5px, #2c2c2c 20px) 0 0 / 20px 20px no-repeat, radial-gradient(circle at 100% 0, transparent 19.5px, #2c2c2c 20px) 100% 0 / 20px 20px no-repeat; }
.plus { width: 22px; height: 22px; margin-left: 21px; }
.chev { width: 56px; height: 56px; border-radius: 20px; background: #2c2c2c; margin: 0 12px 0 auto; display: flex; align-items: center; justify-content: center; }

.toolbar { height: 92px; flex: none; display: flex; align-items: center; padding-left: 31px; }
.nav-i { width: 26px; height: 26px; margin-right: 46px; flex: none; }
.omni { width: 2034px; height: 68px; margin-left: -7px; border-radius: 34px; background: #191919; display: flex; align-items: center; padding-left: 10px; flex: none; }
.info { width: 48px; height: 48px; border-radius: 50%; background: #2c2c2c; display: flex; align-items: center; justify-content: center; }
.url { margin-left: 16px; font-size: 28px; color: #c4c4c4; }
.url em { font-style: normal; color: #e8e8e8; }
.o-zoom { margin-left: auto; margin-right: 33px; }
.o-star { margin-right: 32px; }
.e-rocket { margin-left: 36px; }
.e-fox { margin-left: 40px; }
.e-puz { margin: -4px 0 0 40px; }
.vsep { width: 3px; height: 32px; border-radius: 2px; background: #4d4d4d; flex: none; }
.toolbar .vsep { margin-left: 35px; }
.avatar { width: 40px; height: 40px; margin-left: 32px; border-radius: 50%; background: #5c2191; color: #fff; font-size: 23px; display: flex; align-items: center; justify-content: center; }
.finish { position: relative; width: 246px; height: 68px; margin-left: 24px; border-radius: 34px; background: #1f3863; color: #cbe0ff; font-size: 26px; line-height: 70px; padding-left: 24px; }
.finish b { position: absolute; left: 211px; top: 20px; width: 6px; height: 6px; border-radius: 50%; background: #cbe0ff; }
.finish b:nth-of-type(2) { top: 31px; } .finish b:nth-of-type(3) { top: 42px; }
.finish span { display: inline-block; }

.bookbar { height: 70px; flex: none; display: flex; align-items: flex-start; padding: 12px 0 0 38px; border-bottom: 2px solid #393939; color: #c7c7c7; font-size: 25px; }
.bookbar .grid { margin-top: 2px; }
.bookbar > .vsep { margin: 0 31px 0 30px; }
.bm, .allbm { display: flex; align-items: center; height: 32px; flex: none; }
.bm svg { margin-right: 14px; color: #b9bcc5; flex: none; }
.allbm { margin: 0 30px 0 auto; }
.allbm svg { margin: 0 17px 0 32px; }

.page { position: relative; flex: 1; background: #9da3b0; font-family: Lato, "Noto Sans", sans-serif; overflow: hidden; }
.site-head { position: relative; height: 133px; background: #fff; box-shadow: 0 2px 16px rgba(60, 62, 75, .55); display: flex; z-index: 2; }
.brand { width: 1290px; padding: 17px 0 0 166px; display: flex; flex: none; }
.brand strong { color: #d25f27; font-size: 27px; font-weight: 900; line-height: 30px; margin: 26px 0 0 4px; height: 30px; }
nav { display: flex; padding-top: 56px; font-size: 17px; line-height: 22px; color: #111; height: 78px; }
nav a { display: inline-block; white-space: nowrap; margin-right: 53px; }
.contact, .dismiss, .download { border: 0; padding: 0; background: #bf503a; color: #fff; font-family: inherit; font-size: 18px; }
.contact { position: absolute; left: 2582px; top: 37px; width: 117px; height: 59px; border-radius: 16px; }
.content { padding: 36px 0 0 59px; display: flex; flex-direction: column; gap: 25.8px; }
.row { height: 79px; flex: none; display: flex; align-items: center; padding-left: 27px; border-radius: 10px 0 0 10px; font-size: 18px; color: #3a4050; }
.tint { background: #9a9fb2; }
.name { width: 563px; } .unit { width: 1691px; }
.name span, .unit span { display: inline-block; }
.minus, .add { height: 53px; border-radius: 13px; display: flex; align-items: center; justify-content: center; color: #a4a9b6; }
.minus { width: 64px; background: #373d4b; margin-right: 27px; }
.add { width: 70px; background: #855f65; font-size: 20px; font-weight: 300; }

.modal { position: absolute; left: 864px; top: 157px; width: 1008px; height: 1145px; background: #fff; border-radius: 8px; box-shadow: 0 4px 40px rgba(70, 74, 100, .28); display: flex; flex-direction: column; color: #000; font-size: 18px; }
.dismiss { width: 31px; height: 48px; border-radius: 16px; margin-left: 58px; flex: none; }
.results { margin: 88px 144px 0; }
h4, p { margin: 0; text-align: center; white-space: nowrap; }
h4 { font-size: 18.500px; line-height: 24px; font-weight: 900; }
h4 span, p span { display: inline-block; }
.res { height: 112.600px; border-bottom: 1px solid #c2c2c2; padding-top: 29px; }
.res:first-child { height: 84px; padding-top: 0; }
.res p { width: 106px; height: 37px; margin: 21.500px auto 0; background: #000; color: #fff; font-size: 18.500px; line-height: 28px; }
.res:first-child p { margin-top: 22px; }
.bat { margin-top: 28px; }
.cards { display: flex; justify-content: space-between; margin: 52px 144px 0; }
.card { width: 302px; height: 185px; border-radius: 8px; background: #f2f6fe; padding-top: 60px; }
.wide { width: 360px; }
.card p { line-height: 24px; margin-top: 19px; }
.card .five { margin-top: 76px; color: #bf503a; }
.download { width: 150px; height: 76px; margin: 112px 0 0 370px; border-radius: 18px; color: #120a08; display: flex; flex-direction: column; align-items: center; padding-top: 13px; flex: none; }
.download svg { margin-top: 6px; }

.dock { position: absolute; left: 347px; top: 1705px; width: 2187px; height: 86px; border-radius: 24px; background: #a6a6a6; border: 1px solid #6b6f6d; box-shadow: inset 0 0 0 2px #b5b5b5, 0 2px 30px rgba(0, 0, 0, .14); display: flex; padding: 14px 0 0 14px; }
.app { position: relative; width: 50px; height: 50px; margin-right: 16px; flex: none; }
.app svg { width: 50px; height: 50px; display: block; overflow: visible; filter: drop-shadow(0 1px 1px rgba(0, 0, 0, .3)); }
.app svg.contacts { width: 54px; }
.app svg.preview { width: 53px; height: 53px; }
.app i { position: absolute; left: 20px; top: 58px; width: 8px; height: 8px; border-radius: 50%; background: #fff; }
.dsep { width: 2px; height: 60px; background: #d4d4d4; margin: -2px 19px 0 8px; flex: none; }
.dsep.second { margin: -2px 18px 0 6px; }
.mini { position: relative; width: 58px; height: 50px; margin-right: 8px; display: flex; align-items: center; flex: none; }
.thumb { width: 58px; flex: none; background: #111; border-top: 1px solid #555; }
.thumb.code { background: #171a24; } .thumb.sys { background: #242424; } .thumb.list { background: #333; }
.badge { position: absolute; left: 38px; top: 34px; width: 19px; height: 19px; }
.trash { margin: -4px 0 0 6px; flex: none; }
</style>
